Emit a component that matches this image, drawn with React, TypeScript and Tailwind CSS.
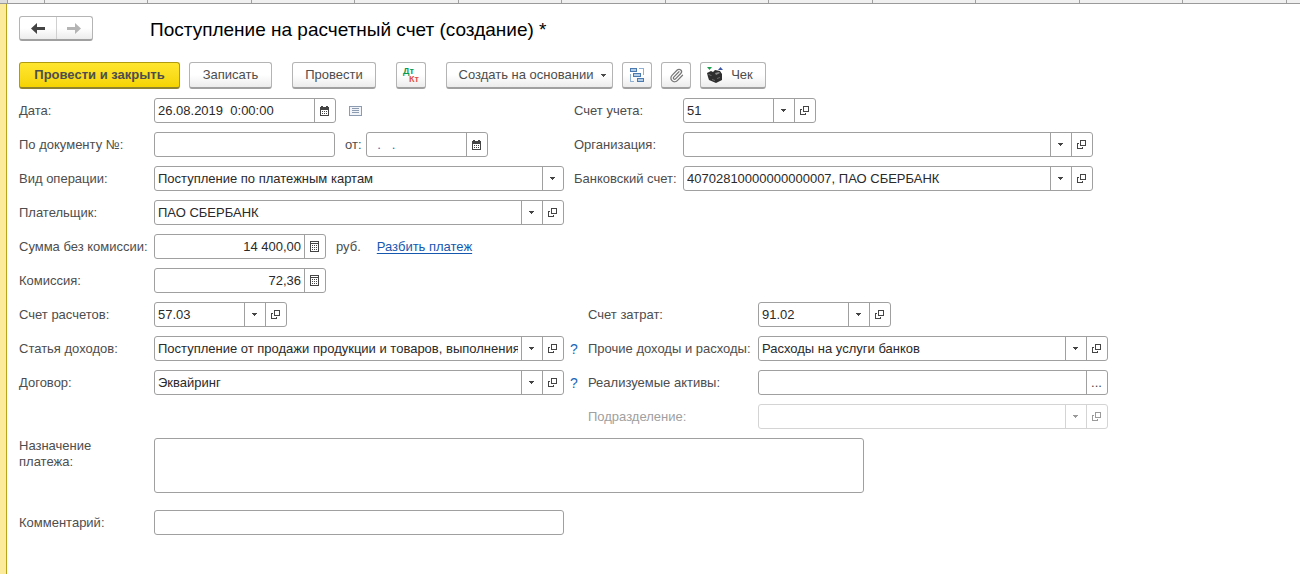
import type { InputHTMLAttributes, ReactNode } from 'react';
import { Paperclip } from 'lucide-react';

const ArrowIcon = ({ flip = false }: { flip?: boolean }) => (
  <svg width="14" height="11" viewBox="0 0 14 11" fill="currentColor" className={flip ? 'rotate-180' : ''}>
    <path d="M0 5.5 6 0v4h8v3H6v4z" />
  </svg>
);

const CaretIcon = () => (
  <svg width="5" height="3" viewBox="0 0 5 3" fill="currentColor" shapeRendering="crispEdges">
    <path d="M0 0h5v1H4v1H3v1H2V2H1V1H0z" />
  </svg>
);

const OpenIcon = () => (
  <svg width="9" height="9" viewBox="0 0 9 9" fill="none" stroke="currentColor" shapeRendering="crispEdges">
    <path d="M3.5.5h5v5h-5zM2 3.5H.5v5h5V7" />
  </svg>
);

const CalendarIcon = () => (
  <svg width="9" height="10" viewBox="0 0 9 10" fill="currentColor" shapeRendering="crispEdges">
    <path d="M0 1h1V0h2v1h3V0h2v1h1v3H0z" />
    <path d="M0 3h1v6h7V3h1v7H0z" />
    <path d="M2 5h1v1H2zM4 5h1v1H4zM6 5h1v1H6zM2 7h1v1H2zM4 7h1v1H4zM6 7h1v1H6z" />
  </svg>
);

const CalculatorIcon = () => (
  <svg width="9" height="11" viewBox="0 0 9 11" fill="currentColor" shapeRendering="crispEdges">
    <path d="M0 0h9v11H0zM1 1v1h7V1zM1 3v7h7V3z" fillRule="evenodd" />
    <path d="M2 4h1v1H2zM4 4h1v1H4zM6 4h1v1H6zM2 6h1v1H2zM4 6h1v1H4zM6 6h1v1H6zM2 8h1v1H2zM4 8h1v1H4zM6 8h1v1H6z" />
  </svg>
);

const ListIcon = () => (
  <svg width="13" height="10" viewBox="0 0 13 10" fill="none" stroke="#8c9bb0" shapeRendering="crispEdges">
    <path d="M.5.5h12v9H.5z" fill="#f1f5fa" />
    <path d="M3 2.5h7M3 4.5h7M3 6.5h7" />
  </svg>
);

const StructureIcon = () => (
  <svg width="16" height="16" viewBox="0 0 16 16" stroke="#4a7ab0" fill="#b4cde6" shapeRendering="crispEdges">
    <path d="M10 1.5h4.500V8M1.500 7v7.500H5" fill="none" stroke="#8fb0d2" />
    <path d="M1.500 1.500h6v3h-6zM4.500 6.500h7v3h-7zM8.500 11.500h6v3h-6z" />
  </svg>
);

const PostingsIcon = () => (
  <svg width="18" height="18" viewBox="0 0 18 18" className="font-bold">
    <text x="1" y="8" fontSize="9" fill="#0a9a4a">Дт</text>
    <text x="7" y="16" fontSize="9" fill="#e0504a">Кт</text>
  </svg>
);

const CashRegisterIcon = () => (
  <svg width="16" height="16" viewBox="0 0 16 16">
    <path d="M0 0h5L2.500 3z" fill="#16a04a" />
    <path d="M11 3h5l-2.500-3z" fill="#3a55a8" />
    <path d="M0 6l4-2 2 1 2-2 5 1 2 3v6l-6 3-7-3-1-3z" fill="#2e2e2e" />
    <path d="M1 7l3 1 1 1-3-1zM8 6l4-1 1 1-4 2z" fill="#8a8a8a" />
    <path d="M5 12l3 1v1l-3-1zM10 11l3-1v1l-3 1z" fill="#6a6a6a" />
  </svg>
);

const icons = {
  caret: <CaretIcon />,
  open: <OpenIcon />,
  calendar: <CalendarIcon />,
  calculator: <CalculatorIcon />,
  dots: <span>...</span>,
};

const iconLabels = {
  caret: 'Выбрать из списка',
  open: 'Открыть',
  calendar: 'Календарь',
  calculator: 'Калькулятор',
  dots: 'Выбрать',
};

type FieldProps = InputHTMLAttributes<HTMLInputElement> & {
  width?: string;
  text?: string;
  actions?: (keyof typeof icons)[];
};

const Field = ({ width = 'w-full', text = '', actions = [], disabled, ...props }: FieldProps) => (
  <div
    className={`flex h-[25px] shrink-0 overflow-hidden rounded-[3px] border bg-white ${width} ${
      disabled ? 'border-[#d4d4d4] text-[#9a9a9a]' : 'border-[#a0a0a0] text-[#444]'
    }`}
  >
    <input
      type="text"
      disabled={disabled}
      className={`min-w-0 flex-1 bg-transparent px-[3px] outline-none ${text || 'text-[#2a2a2a]'}`}
      {...props}
    />
    {actions.map((name) => (
      <button
        key={name}
        type="button"
        disabled={disabled}
        aria-label={iconLabels[name]}
        className="flex w-[21px] shrink-0 items-center justify-center border-l border-inherit pr-px"
      >
        {icons[name]}
      </button>
    ))}
  </div>
);

const Label = ({ id, muted = false, children }: { id: string; muted?: boolean; children: ReactNode }) => (
  <label htmlFor={id} className={`whitespace-nowrap ${muted ? 'text-[#a0a0a0]' : ''}`}>
    {children}
  </label>
);

const ToolButton = ({ className = '', label, children }: { className?: string; label?: string; children: ReactNode }) => (
  <button
    type="button"
    aria-label={label}
    className={`flex h-[27px] shrink-0 items-center justify-center rounded-[3px] border border-b-2 whitespace-nowrap ${
      className.includes('bg-') ? '' : 'border-[#b4b4b4] border-b-[#a0a0a0] bg-linear-to-b from-white from-50% to-[#ececec]'
    } ${className}`}
  >
    {children}
  </button>
);

const Help = () => (
  <button type="button" aria-label="Справка" className="pl-1.5 text-left text-sm text-[#1a66b8]">
    ?
  </button>
);

const SheetTabs = () => (
  <div className="flex h-1 overflow-hidden border-b border-[#9a9a9a] bg-[#f0f0f0]">
    <div className="w-2 shrink-0 border-r border-[#a0a0a0] bg-[#dcdcdc]" />
    <div className="w-[37px] shrink-0 border-r border-[#a0a0a0]" />
    {[...Array(20)].map((_, i) => (
      <div key={i} className={`${i % 2 ? 'w-[104px]' : 'w-[103px]'} shrink-0 border-r border-[#a0a0a0]`} />
    ))}
  </div>
);

function App() {
  return (
    <div className="flex min-h-screen flex-col bg-white font-['Liberation_Sans',Arial,sans-serif] text-[13px] leading-4 text-[#4d4d4d]">
      <SheetTabs />
      <div className="flex flex-1">
        <div className="w-[7px] shrink-0 border-r border-[#b9a41c] bg-[#fdeb9c]" />

        <main className="min-w-0 flex-1 pt-3 pr-4 pl-3">
          <header className="flex items-start gap-[57px]">
            <div className="flex h-[25px] w-[74px] rounded-[3px] border border-b-2 border-[#b4b4b4] border-b-[#a0a0a0] bg-linear-to-b from-white from-50% to-[#ececec]">
              <button type="button" aria-label="Назад" className="flex flex-1 items-center justify-center text-[#444]">
                <ArrowIcon />
              </button>
              <button
                type="button"
                aria-label="Вперед"
                className="flex flex-1 items-center justify-center border-l border-[#d0d0d0] text-[#b4b4b4]"
              >
                <ArrowIcon flip />
              </button>
            </div>
            <h1 className="text-[19px] leading-7 whitespace-nowrap text-black">
              Поступление на расчетный счет (создание) *
            </h1>
          </header>

          <div className="mt-[18px] flex gap-5">
            <div className="flex gap-[9px]">
              <ToolButton className="w-[161px] border-[#b09a10] border-b-[#8f8330] bg-linear-to-b from-[#ffe62e] to-[#f5d400] font-bold">
                Провести и закрыть
              </ToolButton>
              <ToolButton className="w-[83px]">Записать</ToolButton>
            </div>
            <ToolButton className="w-[84px]">Провести</ToolButton>
            <ToolButton className="w-[30px]" label="Дт Кт">
              <PostingsIcon />
            </ToolButton>
            <div className="flex gap-[9px]">
              <ToolButton className="w-[167px] gap-2 pl-1.5">
                Создать на основании
                <CaretIcon />
              </ToolButton>
              <ToolButton className="w-[30px]" label="Структура подчиненности">
                <StructureIcon />
              </ToolButton>
              <ToolButton className="w-[30px]" label="Присоединенные файлы">
                <Paperclip size={15} strokeWidth={2} className="text-[#777]" />
              </ToolButton>
              <ToolButton className="w-[66px] gap-2 pr-1.5">
                <CashRegisterIcon />
                Чек
              </ToolButton>
            </div>
          </div>

          <form className="mt-[9px]">
            <div className="grid grid-cols-[135px_420px_109px_410px] items-center gap-y-[9px]">
              <Label id="date">Дата:</Label>
              <div className="flex items-center gap-[13px]">
                <Field id="date" width="w-[182px]" defaultValue="26.08.2019  0:00:00" actions={['calendar']} />
                <button type="button" aria-label="Список">
                  <ListIcon />
                </button>
              </div>
              <Label id="account">Счет учета:</Label>
              <Field id="account" width="w-[133px]" defaultValue="51" actions={['caret', 'open']} />

              <Label id="docNumber">По документу №:</Label>
              <div className="flex items-center">
                <Field id="docNumber" width="w-[181px]" />
                <label htmlFor="docDate" className="w-[31px] pl-2.5">от:</label>
                <Field id="docDate" width="w-[122px]" text="text-[#2f6fae]" defaultValue="  .   ." actions={['calendar']} />
              </div>
              <Label id="organization">Организация:</Label>
              <Field id="organization" actions={['caret', 'open']} />

              <Label id="operation">Вид операции:</Label>
              <Field
                id="operation"
                width="w-[410px]"
                defaultValue="Поступление по платежным картам"
                actions={['caret']}
              />
              <Label id="bankAccount">Банковский счет:</Label>
              <Field
                id="bankAccount"
                defaultValue="40702810000000000007, ПАО СБЕРБАНК"
                actions={['caret', 'open']}
              />

              <Label id="payer">Плательщик:</Label>
              <div className="col-span-3">
                <Field id="payer" width="w-[410px]" defaultValue="ПАО СБЕРБАНК" actions={['caret', 'open']} />
              </div>

              <Label id="amount">Сумма без комиссии:</Label>
              <div className="col-span-3 flex items-center">
                <Field
                  id="amount"
                  width="w-[172px]"
                  text="text-right text-[#2a2a2a]"
                  defaultValue="14 400,00"
                  actions={['calculator']}
                />
                <span className="pl-2.5">руб.</span>
                <a href="#split" className="ml-4 text-[#1558b0] underline underline-offset-2">
                  Разбить платеж
                </a>
              </div>

              <Label id="fee">Комиссия:</Label>
              <div className="col-span-3">
                <Field
                  id="fee"
                  width="w-[172px]"
                  text="text-right text-[#2a2a2a]"
                  defaultValue="72,36"
                  actions={['calculator']}
                />
              </div>
            </div>

            <div className="mt-[9px] grid grid-cols-[135px_410px_24px_170px_350px] items-center gap-y-[9px]">
              <Label id="settlement">Счет расчетов:</Label>
              <Field id="settlement" width="w-[133px]" defaultValue="57.03" actions={['caret', 'open']} />
              <span />
              <Label id="costAccount">Счет затрат:</Label>
              <Field id="costAccount" width="w-[133px]" defaultValue="91.02" actions={['caret', 'open']} />

              <Label id="income">Статья доходов:</Label>
              <Field
                id="income"
                defaultValue="Поступление от продажи продукции и товаров, выполнения"
                actions={['caret', 'open']}
              />
              <Help />
              <Label id="other">Прочие доходы и расходы:</Label>
              <Field id="other" defaultValue="Расходы на услуги банков" actions={['caret', 'open']} />

              <Label id="contract">Договор:</Label>
              <Field id="contract" defaultValue="Эквайринг" actions={['caret', 'open']} />
              <Help />
              <Label id="assets">Реализуемые активы:</Label>
              <Field id="assets" actions={['dots']} />

              <span className="col-span-3" />
              <Label id="department" muted>Подразделение:</Label>
              <Field id="department" disabled actions={['caret', 'open']} />
            </div>

            <div className="mt-[9px] grid grid-cols-[135px_710px] gap-y-[17px]">
              <label htmlFor="purpose" className="w-24">Назначение платежа:</label>
              <textarea
                id="purpose"
                className="h-[55px] resize-none rounded-[3px] border border-[#a0a0a0] px-[3px] outline-none"
              />
              <label htmlFor="comment" className="self-center">Комментарий:</label>
              <Field id="comment" width="w-[410px]" />
            </div>
          </form>
        </main>
      </div>
    </div>
  );
}

export default App;
